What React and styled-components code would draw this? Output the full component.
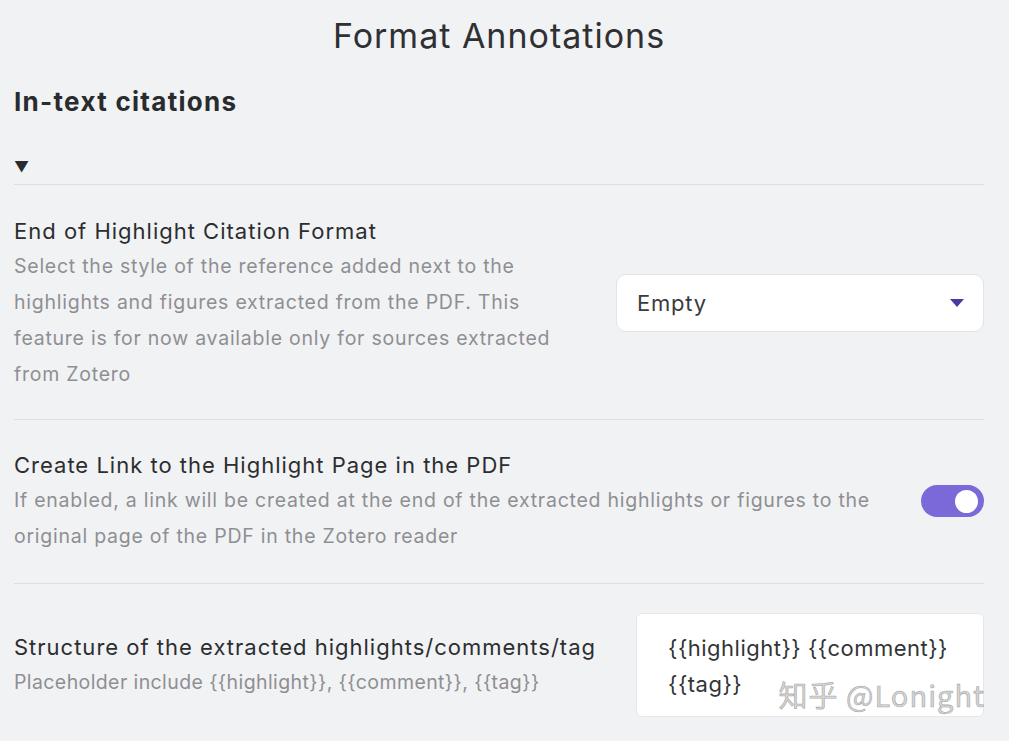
import React from "react";
import styled, { createGlobalStyle } from "styled-components";

const Global = createGlobalStyle`
  html, body { margin: 0; padding: 0; background: #f1f2f4; }
  body { font-family: Inter, "Noto Sans", sans-serif; color: #2c2c2e; }
  * { box-sizing: border-box; }
`;

const Page = styled.div`
  position: relative;
  width: 1009px;
  height: 741px;
  overflow: hidden;
  padding: 16px 25px 0 14px;
`;

const Title = styled.h1`
  margin: 0;
  text-align: center;
  font-size: 34px;
  font-weight: 400;
  line-height: 40px;
  letter-spacing: 1px;
  color: #2f3033;
`;

const Heading = styled.h2`
  margin: 30px 0 0;
  font-size: 26px;
  font-weight: 700;
  line-height: 32px;
  letter-spacing: 1.3px;
  color: #2a2b2e;
`;

const Toggle = styled.div`
  margin-top: 36px;
  font-size: 15px;
  line-height: 26px;
  color: #2a2b2e;
  padding-bottom: 4px;
  border-bottom: 1px solid #dddee1;
`;

const Row = styled.div`
  display: flex;
  align-items: center;
  gap: ${(p) => p.$gap || 36}px;
  padding: ${(p) => p.$pad || "29px 0 27px"};
  border-bottom: ${(p) => (p.$last ? "none" : "1px solid #dddee1")};
`;

const Info = styled.div`
  flex: 1;
  min-width: 0;
`;

const Name = styled.div`
  font-size: 22px;
  line-height: 34px;
  letter-spacing: 1px;
  color: #2c2d30;
  white-space: nowrap;
`;

const Desc = styled.div`
  font-size: 19.5px;
  line-height: 36px;
  letter-spacing: ${(p) => p.$ls || 0.75}px;
  color: #8e8f92;
`;

const Select = styled.div`
  flex: 0 0 368px;
  height: 58px;
  background: #fff;
  border: 1px solid #e2e3e6;
  border-radius: 10px;
  display: flex;
  align-items: center;
  justify-content: space-between;
  padding: 0 18px 0 20px;
  font-size: 22px;
  letter-spacing: 0.8px;
  color: #3a3b3e;
`;

const Switch = styled.div`
  flex: 0 0 63px;
  height: 32px;
  border-radius: 16px;
  background: #7b68d9;
  display: flex;
  align-items: center;
  justify-content: flex-end;
  padding-right: 6px;
`;

const Knob = styled.div`
  width: 23px;
  height: 23px;
  border-radius: 50%;
  background: #fff;
`;

const TextArea = styled.div`
  flex: 0 0 348px;
  height: 104px;
  background: #fff;
  border: 1px solid #e6e7ea;
  border-radius: 6px;
  padding: 16px 14px 0 31px;
  font-size: 22px;
  line-height: 36px;
  letter-spacing: 0.5px;
  color: #333436;
`;

const Watermark = styled.div`
  position: absolute;
  right: 24px;
  bottom: 26px;
  font-family: "Noto Sans CJK SC", "Noto Sans", sans-serif;
  font-size: 29px;
  letter-spacing: 1px;
  color: rgba(205, 205, 205, 0.85);
  -webkit-text-stroke: 0.6px rgba(120, 120, 120, 0.6);
  white-space: nowrap;
`;

const Caret = () => (
  <svg width="16" height="10" viewBox="0 0 16 10">
    <path d="M1 1 L15 1 L8 9 Z" fill="#4a3aa0" />
  </svg>
);

export default function App() {
  return (
    <>
      <Global />
      <Page>
        <Title>Format Annotations</Title>
        <Heading>In-text citations</Heading>
        <Toggle>▼</Toggle>
        <Row>
          <Info>
            <Name>End of Highlight Citation Format</Name>
            <Desc>
              Select the style of the reference added next to the highlights and figures
              extracted from the PDF. This feature is for now available only for sources
              extracted from Zotero
            </Desc>
          </Info>
          <Select>
            <span>Empty</span>
            <Caret />
          </Select>
        </Row>
        <Row $pad="28px 0 29px">
          <Info>
            <Name>Create Link to the Highlight Page in the PDF</Name>
            <Desc>
              If enabled, a link will be created at the end of the extracted highlights or
              figures to the original page of the PDF in the Zotero reader
            </Desc>
          </Info>
          <Switch>
            <Knob />
          </Switch>
        </Row>
        <Row $gap={20} $pad="29px 0 0" $last>
          <Info>
            <Name>Structure of the extracted highlights/comments/tag</Name>
            <Desc $ls={0.4}>Placeholder include {"{{highlight}}"}, {"{{comment}}"}, {"{{tag}}"}</Desc>
          </Info>
          <TextArea>
            {"{{highlight}} {{comment}}"}
            <br />
            {"{{tag}}"}
          </TextArea>
        </Row>
        <Watermark>知乎 @Lonight</Watermark>
      </Page>
    </>
  );
}
